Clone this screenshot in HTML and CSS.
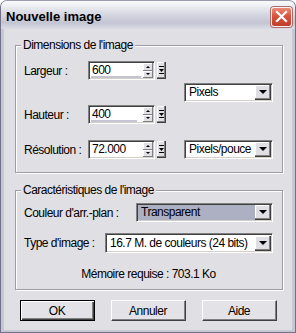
FILE: index.html
```html
<!DOCTYPE html>
<html lang="fr">

<head>
    <meta charset="UTF-8" />
    <title>Nouvelle image</title>
    <meta name="viewport" content="width=device-width, initial-scale=1.0" />
    <link rel="stylesheet" href="styles.css">
</head>

<body>
    <div class="window">
        <div class="titlebar">
            <span class="title">Nouvelle image</span>
            <button type="button" class="close" aria-label="Fermer">
                <svg width="13" height="13" viewBox="0 0 13 13">
                    <path d="M2 2 L11 11 M11 2 L2 11" stroke="#fff" stroke-width="2.2" stroke-linecap="square" />
                </svg>
            </button>
        </div>

        <div class="client">
            <fieldset class="group group-size">
                <legend>Dimensions de l'image</legend>

                <div class="size-block">
                    <div class="fields">
                        <div class="row">
                            <label class="lbl">Largeur :</label>
                            <div class="spin-field">
                                <div class="spin-edit">
                                    <span class="value">600</span>
                                    <span class="track" style="width: 50px"></span>
                                    <div class="spin"><span class="up"></span><span class="down"></span></div>
                                </div>
                                <span class="preset"><svg width="9" height="17" viewBox="0 0 9 17"><rect x="2" y="4" width="5" height="1" /><polygon points="2,7 7,7 4.5,10" /><rect x="2" y="11" width="5" height="1" /></svg></span>
                            </div>
                        </div>
                        <div class="row row-far">
                            <label class="lbl">Hauteur :</label>
                            <div class="spin-field">
                                <div class="spin-edit">
                                    <span class="value">400</span>
                                    <span class="track" style="width: 46px"></span>
                                    <div class="spin"><span class="up"></span><span class="down"></span></div>
                                </div>
                                <span class="preset"><svg width="9" height="17" viewBox="0 0 9 17"><rect x="2" y="4" width="5" height="1" /><polygon points="2,7 7,7 4.5,10" /><rect x="2" y="11" width="5" height="1" /></svg></span>
                            </div>
                        </div>
                    </div>
                    <div class="combo combo-unit">
                        <span class="combo-text">Pixels</span>
                        <span class="combo-btn"></span>
                    </div>
                </div>

                <div class="size-block res-block">
                    <div class="row">
                        <label class="lbl">Résolution :</label>
                        <div class="spin-field">
                            <div class="spin-edit">
                                <span class="value">72.000</span>
                                <div class="spin"><span class="up"></span><span class="down"></span></div>
                            </div>
                            <span class="preset"><svg width="9" height="17" viewBox="0 0 9 17"><rect x="2" y="4" width="5" height="1" /><polygon points="2,7 7,7 4.5,10" /><rect x="2" y="11" width="5" height="1" /></svg></span>
                        </div>
                    </div>
                    <div class="combo combo-unit">
                        <span class="combo-text">Pixels/pouce</span>
                        <span class="combo-btn"></span>
                    </div>
                </div>
            </fieldset>

            <fieldset class="group group-props">
                <legend>Caractéristiques de l'image</legend>

                <div class="row prop-row">
                    <label class="lbl">Couleur d'arr.-plan :</label>
                    <div class="combo combo-bg selected">
                        <span class="combo-text">Transparent</span>
                        <span class="combo-btn"></span>
                    </div>
                </div>
                <div class="row prop-row prop-next">
                    <label class="lbl">Type d'image :</label>
                    <div class="combo combo-type">
                        <span class="combo-text">16.7 M. de couleurs (24 bits)</span>
                        <span class="combo-btn"></span>
                    </div>
                </div>

                <p class="memory">Mémoire requise : 703.1 Ko</p>
            </fieldset>

            <div class="actions">
                <button type="button" class="btn btn-default">OK</button>
                <button type="button" class="btn">Annuler</button>
                <button type="button" class="btn">Aide</button>
            </div>
        </div>
    </div>
</body>

</html>
```

FILE: styles.css
```css
body {
    margin: 0;
    font-family: "Liberation Sans", Arial, sans-serif;
    font-size: 12px;
    letter-spacing: -0.5px;
    color: #000;
    background: #fff;
}

.window {
    width: 296px;
    height: 333px;
    box-sizing: border-box;
    display: flex;
    flex-direction: column;
    background: #c6c7d4;
    border: 1px solid #707186;
    border-top-color: #9a9bad;
    border-radius: 7px 7px 0 0;
    overflow: hidden;
}

.titlebar {
    height: 28px;
    flex: none;
    box-sizing: border-box;
    display: flex;
    align-items: center;
    justify-content: space-between;
    padding: 3px 3px 0 5px;
    background: linear-gradient(to bottom,
            #fafafc 0px,
            #eeeff4 5px,
            #dcdde6 11px,
            #cbcdd9 18px,
            #c3c5d3 22px,
            #d9dae3 27px);
}

.title {
    font-weight: bold;
    font-size: 13px;
    letter-spacing: 0;
    color: #000;
}

.close {
    width: 21px;
    height: 20px;
    padding: 0;
    display: flex;
    align-items: center;
    justify-content: center;
    background: linear-gradient(to bottom, #ee8a78, #d9523c 45%, #c23f2b);
    border: 1px solid #f4f4f6;
    border-radius: 3px;
    box-shadow: 0 0 0 1px #b06a66;
}

.client {
    flex: 1;
    margin: 0 3px 2px;
    background: #e0dfe3;
    display: flex;
    flex-direction: column;
}

/* group boxes */
.group {
    margin: 10px 9px 0 11px;
    padding: 9px 9px 13px 8px;
    border: 1px solid #9d9da6;
    box-shadow: inset 1px 1px 0 #fff, 1px 1px 0 #fff;
    min-width: 0;
}

.group legend {
    margin-left: -3px;
    padding: 0 2px;
    line-height: 13px;
    background: #e0dfe3;
}

.group-props {
    margin-top: 11px;
    padding: 6px 9px 8px 8px;
}

.row {
    display: flex;
    align-items: center;
}

.lbl {
    width: 64px;
    flex: none;
    white-space: nowrap;
}

.row-far {
    margin-top: 25px;
}

.size-block {
    display: flex;
    align-items: center;
    justify-content: space-between;
}

.res-block {
    margin-top: 16px;
}

/* numeric fields */
.spin-field {
    display: flex;
    align-items: center;
    gap: 2px;
}

.spin-edit,
.combo {
    position: relative;
    box-sizing: border-box;
    height: 19px;
    display: flex;
    align-items: center;
    background: #fff;
    border: 1px solid;
    border-color: #808080 #fff #fff #808080;
    box-shadow: inset 1px 1px 0 #404040, inset -1px -1px 0 #d4d0c8;
}

.spin-edit {
    width: 67px;
    padding: 1px;
}

.value {
    flex: 1;
    padding-left: 2px;
    line-height: 15px;
}

.track {
    position: absolute;
    left: 2px;
    bottom: 1px;
    height: 2px;
    background: #c4c4d0;
}

.spin {
    width: 10px;
    height: 15px;
    display: flex;
    flex-direction: column;
}

.spin span {
    flex: 1;
    display: flex;
    align-items: center;
    justify-content: center;
    background: #e0dfe3;
    box-shadow: inset -1px -1px 0 #808080, inset 1px 1px 0 #fff;
}

.spin .up::after {
    content: "";
    border-left: 2px solid transparent;
    border-right: 2px solid transparent;
    border-bottom: 2px solid #000;
}

.spin .down::after {
    content: "";
    border-left: 2px solid transparent;
    border-right: 2px solid transparent;
    border-top: 2px solid #000;
}

.preset {
    display: flex;
    width: 9px;
    height: 17px;
    background: #e0dfe3;
    box-shadow: inset -1px -1px 0 #404040, inset -2px -2px 0 #808080, inset 1px 1px 0 #fff;
}

.preset svg {
    fill: #000;
}

/* combo boxes */
.combo {
    padding: 1px;
}

.combo-text {
    flex: 1;
    padding-left: 3px;
    line-height: 15px;
    white-space: nowrap;
    overflow: hidden;
}

.combo-btn {
    width: 16px;
    height: 15px;
    flex: none;
    display: flex;
    align-items: center;
    justify-content: center;
    background: #e0dfe3;
    box-shadow: inset -1px -1px 0 #404040, inset -2px -2px 0 #808080, inset 1px 1px 0 #fff;
}

.combo-btn::after {
    content: "";
    margin: 0 1px 1px 0;
    border-left: 4px solid transparent;
    border-right: 4px solid transparent;
    border-top: 4px solid #000;
}

.combo-unit {
    width: 89px;
}

.prop-row {
    justify-content: space-between;
}

.prop-row .lbl {
    width: auto;
}

.prop-next {
    margin-top: 11px;
}

.combo-bg {
    width: 137px;
}

.combo-type {
    width: 168px;
    height: 20px;
}

.combo.selected {
    background: #adafc2;
}

.memory {
    margin: 15px 0 0;
    text-align: center;
    line-height: 13px;
}

/* dialog buttons */
.actions {
    display: flex;
    justify-content: center;
    gap: 16px;
    margin-top: 10px;
}

.btn {
    width: 75px;
    height: 21px;
    padding: 0;
    font-family: inherit;
    font-size: 12px;
    letter-spacing: inherit;
    color: #000;
    background: #e3e2e6;
    border: 1px solid;
    border-color: #fff #404040 #404040 #fff;
    box-shadow: inset -1px -1px 0 #808080;
}

.btn-default {
    border: 1px solid #000;
    box-shadow: inset 1px 1px 0 #fff, inset -1px -1px 0 #404040, inset -2px -2px 0 #808080;
}
```
